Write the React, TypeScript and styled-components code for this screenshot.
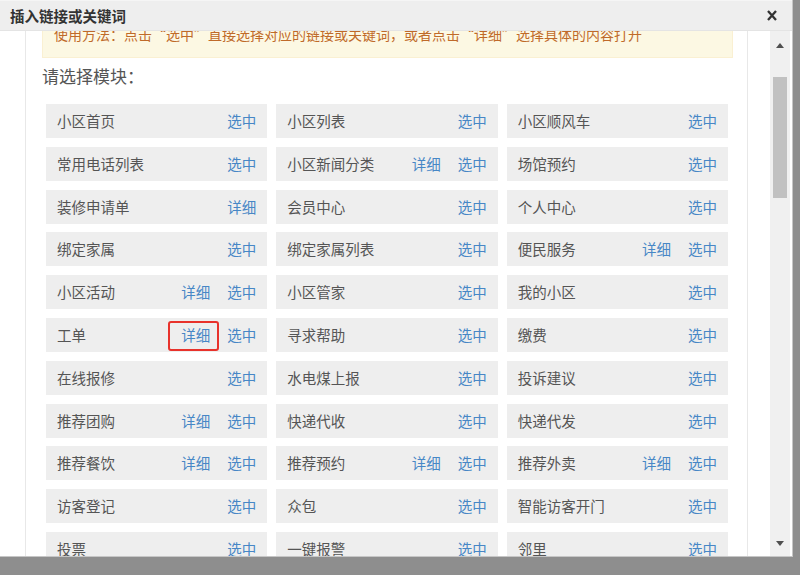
import React, { useLayoutEffect, useRef } from "react";
import styled, { createGlobalStyle } from "styled-components";

const GlobalStyle = createGlobalStyle`
  html, body { margin: 0; padding: 0; background: #8e8e8e; }
  body { font-family: "Noto Sans CJK SC", "Noto Sans", sans-serif; }
  * { box-sizing: border-box; }
`;

const Dialog = styled.div`
  width: 793px;
  height: 557px;
  background: #fff;
  display: flex;
  flex-direction: column;
  border-right: 1px solid #c6c6c6;
  border-bottom: 1px solid #c6c6c6;
`;

const TitleBar = styled.div`
  flex: none;
  height: 31px;
  background: #eeeeee;
  border-top: 1px solid #f5f5f5;
  border-bottom: 1px solid #e4e4e4;
  display: flex;
  align-items: center;
  justify-content: space-between;
  padding: 0 14px 0 10px;
`;

const Title = styled.div`
  font-size: 14.5px;
  font-weight: bold;
  color: #333;
  line-height: 20px;
`;

const Close = styled.button`
  border: 0;
  background: none;
  padding: 0;
  width: 12px;
  height: 12px;
  display: flex;
  align-items: center;
  justify-content: center;
  cursor: pointer;
`;

const Body = styled.div`
  flex: 1;
  min-height: 0;
  display: flex;
  padding-right: 2px;
`;

const Viewport = styled.div`
  flex: 1;
  overflow-y: auto;
  scrollbar-width: none;
  &::-webkit-scrollbar { display: none; }
`;

const Page = styled.div`
  margin-left: 25px;
  width: 723px;
  border-left: 1px solid #e8e8e8;
  border-right: 1px solid #e8e8e8;
  padding: 15px 14px 30px 16px;
`;

const Notice = styled.div`
  background: #fcf8e3;
  border: 1px solid #faf0d2;
  color: #bf6a2a;
  font-size: 14px;
  line-height: 20px;
  padding: 11px 11px 13px;
  white-space: nowrap;
  overflow: hidden;
`;

const Heading = styled.div`
  font-size: 17px;
  line-height: 24px;
  color: #555;
  margin: 6px 0 16px;
`;

const Grid = styled.div`
  display: grid;
  grid-template-columns: repeat(3, 1fr);
  column-gap: 9px;
  row-gap: 8.8px;
  padding: 0 5px 0 4px;
`;

const Cell = styled.div`
  height: 34px;
  background: #eeeeee;
  display: flex;
  align-items: center;
  padding: 0 11px;
  font-size: 14.5px;
  line-height: 20px;
`;

const Name = styled.span`
  flex: 1;
  color: #555;
  white-space: nowrap;
`;

const Links = styled.span`
  display: flex;
  gap: 17px;
`;

const Link = styled.a<{ $marked?: boolean }>`
  color: #4787c6;
  text-decoration: none;
  cursor: pointer;
  position: relative;
  &::after {
    content: "";
    display: ${(p) => (p.$marked ? "block" : "none")};
    position: absolute;
    top: -4px;
    bottom: -6px;
    left: -13px;
    right: -9px;
    border: 2px solid #e8322b;
    border-radius: 3px;
  }
`;

const Rail = styled.div`
  width: 20px;
  background: #f0f0f0;
  display: flex;
  flex-direction: column;
`;

const ArrowButton = styled.div<{ $h: number }>`
  flex: none;
  height: ${(p) => p.$h}px;
  display: flex;
  align-items: center;
  justify-content: center;
`;

const Track = styled.div`
  flex: 1;
  display: flex;
  justify-content: center;
`;

const Thumb = styled.div`
  margin-top: 18px;
  width: 14px;
  height: 121px;
  background: #c1c1c1;
`;

type Item = { name: string; detail?: boolean; select?: boolean; mark?: boolean };

const items: Item[] = [
  { name: "小区首页", select: true },
  { name: "小区列表", select: true },
  { name: "小区顺风车", select: true },
  { name: "常用电话列表", select: true },
  { name: "小区新闻分类", detail: true, select: true },
  { name: "场馆预约", select: true },
  { name: "装修申请单", detail: true },
  { name: "会员中心", select: true },
  { name: "个人中心", select: true },
  { name: "绑定家属", select: true },
  { name: "绑定家属列表", select: true },
  { name: "便民服务", detail: true, select: true },
  { name: "小区活动", detail: true, select: true },
  { name: "小区管家", select: true },
  { name: "我的小区", select: true },
  { name: "工单", detail: true, select: true, mark: true },
  { name: "寻求帮助", select: true },
  { name: "缴费", select: true },
  { name: "在线报修", select: true },
  { name: "水电煤上报", select: true },
  { name: "投诉建议", select: true },
  { name: "推荐团购", detail: true, select: true },
  { name: "快递代收", select: true },
  { name: "快递代发", select: true },
  { name: "推荐餐饮", detail: true, select: true },
  { name: "推荐预约", detail: true, select: true },
  { name: "推荐外卖", detail: true, select: true },
  { name: "访客登记", select: true },
  { name: "众包", select: true },
  { name: "智能访客开门", select: true },
  { name: "投票", select: true },
  { name: "一键报警", select: true },
  { name: "邻里", select: true },
];

const Triangle = ({ down }: { down?: boolean }) => (
  <svg width="8" height="5" viewBox="0 0 8 5">
    <path d={down ? "M0 0 H8 L4 5 Z" : "M0 5 H8 L4 0 Z"} fill="#505050" />
  </svg>
);

export default function App() {
  const ref = useRef<HTMLDivElement>(null);
  useLayoutEffect(() => {
    if (ref.current) ref.current.scrollTop = 34;
  }, []);
  return (
    <>
      <GlobalStyle />
      <Dialog>
        <TitleBar>
          <Title>插入链接或关键词</Title>
          <Close aria-label="关闭">
            <svg width="10" height="11" viewBox="0 0 10 11">
              <path d="M1 1 L9 10 M9 1 L1 10" stroke="#333" strokeWidth="2.3" />
            </svg>
          </Close>
        </TitleBar>
        <Body>
          <Viewport ref={ref}>
            <Page>
              <Notice>
                使用方法：点击“选中”直接选择对应的链接或关键词，或者点击“详细”选择具体的内容打开
              </Notice>
              <Heading>请选择模块：</Heading>
              <Grid>
                {items.map((it) => (
                  <Cell key={it.name}>
                    <Name>{it.name}</Name>
                    <Links>
                      {it.detail && <Link $marked={it.mark}>详细</Link>}
                      {it.select && <Link>选中</Link>}
                    </Links>
                  </Cell>
                ))}
              </Grid>
            </Page>
          </Viewport>
          <Rail>
            <ArrowButton $h={28}>
              <Triangle />
            </ArrowButton>
            <Track>
              <Thumb />
            </Track>
            <ArrowButton $h={26}>
              <Triangle down />
            </ArrowButton>
          </Rail>
        </Body>
      </Dialog>
    </>
  );
}
